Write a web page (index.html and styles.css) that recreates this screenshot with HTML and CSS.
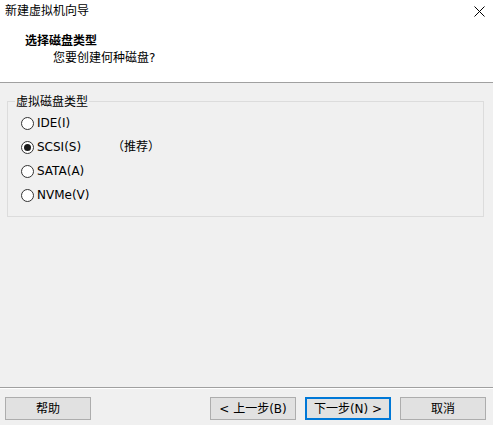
FILE: index.html
```html
<!DOCTYPE html>
<html lang="zh">
<head>
<meta charset="utf-8">
<link rel="stylesheet" href="styles.css">
</head>
<body>
<div class="window">
  <div class="header">
    <div class="titlebar">
      <span class="title">新建虚拟机向导</span>
      <svg class="close" width="11" height="11" viewBox="0 0 11 11"><path d="M0.5 0.5 L10.5 10.5 M10.5 0.5 L0.5 10.5" stroke="#000" stroke-width="1" fill="none"/></svg>
    </div>
    <div class="heading">选择磁盘类型</div>
    <div class="subheading">您要创建何种磁盘?</div>
  </div>
  <div class="main">
    <fieldset class="group">
      <legend>虚拟磁盘类型</legend>
      <div class="opt"><span class="radio"></span><span class="opt-label">IDE(I)</span></div>
      <div class="opt"><span class="radio checked"></span><span class="opt-label">SCSI(S)</span><span>（推荐）</span></div>
      <div class="opt"><span class="radio"></span><span class="opt-label">SATA(A)</span></div>
      <div class="opt"><span class="radio"></span><span class="opt-label">NVMe(V)</span></div>
    </fieldset>
  </div>
  <div class="footer">
    <button class="btn">帮助</button>
    <div class="spacer"></div>
    <button class="btn">&lt; 上一步(B)</button>
    <button class="btn primary">下一步(N) &gt;</button>
    <button class="btn">取消</button>
  </div>
</div>
</body>
</html>
```
FILE: styles.css
```css
* { box-sizing: border-box; }
html, body { margin: 0; padding: 0; }
body {
  width: 493px;
  height: 425px;
  background: #f0f0f0;
  font-family: "DejaVu Sans", "Noto Sans CJK SC", sans-serif;
  font-size: 12px;
  line-height: 16px;
  color: #000;
  overflow: hidden;
}
.window {
  display: flex;
  flex-direction: column;
  height: 425px;
}
.header {
  background: #fff;
  height: 83px;
  border-bottom: 1px solid #a0a0a0;
}
.titlebar {
  display: flex;
  justify-content: space-between;
  align-items: center;
  padding: 3px 8px 0 5px;
  height: 19px;
}
.close { display: block; }
.heading {
  font-weight: bold;
  margin-top: 14px;
  padding-left: 25px;
}
.subheading {
  margin-top: 1px;
  padding-left: 53px;
}
.main {
  flex: 1;
  padding: 11px 9px 0 7px;
}
.group {
  margin: 0;
  border: 1px solid #dcdcdc;
  padding: 3px 7px 8px 13px;
  height: 123px;
}
.group legend {
  padding: 0 1px;
  margin-left: -6px;
  line-height: 14px;
  position: relative;
  top: 1px;
}
.opt {
  display: flex;
  align-items: center;
  height: 24px;
}
.radio {
  width: 13px;
  height: 13px;
  border: 1px solid #333;
  border-radius: 50%;
  background: #fff;
  margin-right: 3px;
  display: flex;
  align-items: center;
  justify-content: center;
  flex: none;
}
.radio.checked::after {
  content: "";
  width: 7px;
  height: 7px;
  border-radius: 50%;
  background: #1a1a1a;
}
.opt-label {
  width: 75px;
}
.footer {
  height: 38px;
  border-top: 1px solid #a0a0a0;
  box-shadow: inset 0 1px 0 #fff;
  display: flex;
  align-items: flex-start;
  padding: 9px 7px 0 5px;
  gap: 9px;
}
.spacer { flex: 1; }
.btn {
  width: 86px;
  height: 23px;
  border: 1px solid #adadad;
  background: #e1e1e1;
  font-family: inherit;
  font-size: 12px;
  line-height: 16px;
  padding: 0;
  color: #000;
}
.btn.primary {
  border: 2px solid #0078d7;
}
```
